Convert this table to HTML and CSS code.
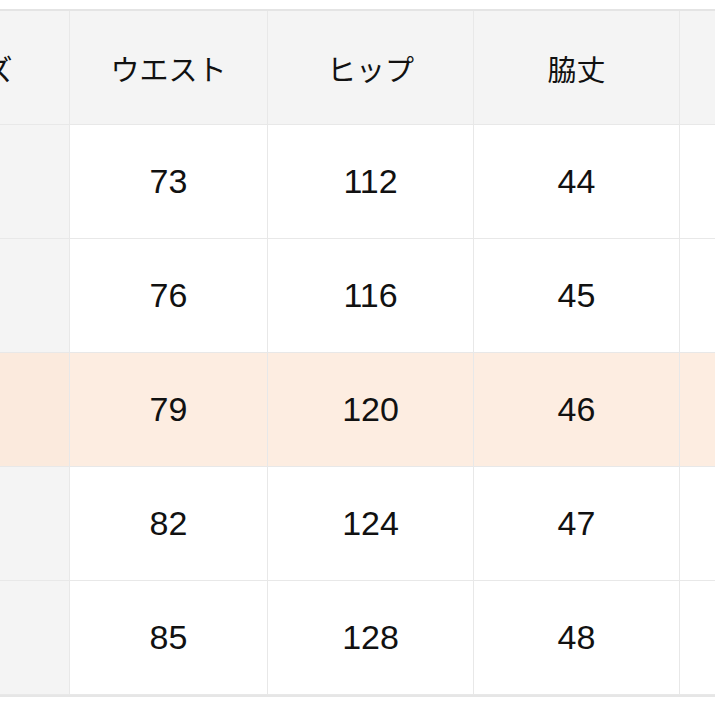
FILE: index.html
```html
<!DOCTYPE html>
<html lang="ja">
<head>
<meta charset="utf-8">
<link rel="stylesheet" href="styles.css">
</head>
<body>
<div class="frame">
  <div class="size-table">
    <div class="cell head first">サイズ</div>
    <div class="cell head">ウエスト</div>
    <div class="cell head">ヒップ</div>
    <div class="cell head">脇丈</div>
    <div class="cell head last"></div>

    <div class="cell first"></div>
    <div class="cell num">73</div>
    <div class="cell num">112</div>
    <div class="cell num">44</div>
    <div class="cell last"></div>

    <div class="cell first"></div>
    <div class="cell num">76</div>
    <div class="cell num">116</div>
    <div class="cell num">45</div>
    <div class="cell last"></div>

    <div class="cell first hl"></div>
    <div class="cell num hl">79</div>
    <div class="cell num hl">120</div>
    <div class="cell num hl">46</div>
    <div class="cell last hl"></div>

    <div class="cell first"></div>
    <div class="cell num">82</div>
    <div class="cell num">124</div>
    <div class="cell num">47</div>
    <div class="cell last"></div>

    <div class="cell first"></div>
    <div class="cell num">85</div>
    <div class="cell num">128</div>
    <div class="cell num">48</div>
    <div class="cell last"></div>
  </div>
</div>
</body>
</html>
```

FILE: styles.css
```css
html, body {
  margin: 0;
  padding: 0;
  background: #ffffff;
  overflow: hidden;
}

.frame {
  width: 715px;
  height: 715px;
  overflow: hidden;
  padding-top: 9px;
  box-sizing: border-box;
}

.size-table {
  display: grid;
  grid-template-columns: 200px 198px 206px 206px 206px;
  grid-auto-rows: 114px;
  width: 1016px;
  margin-left: -130px;
  border-top: 2px solid #e4e4e4;
  border-bottom: 2px solid #e6e6e6;
  color: #111111;
}

.cell {
  box-sizing: border-box;
  display: flex;
  align-items: center;
  justify-content: center;
  border-right: 1px solid #e8e8e8;
  border-bottom: 1px solid #e8e8e8;
  background: #ffffff;
}

.head {
  background: #f4f4f4;
  font-family: "Noto Sans CJK JP", "Noto Sans", sans-serif;
  font-size: 29px;
  font-weight: 400;
}

.first {
  background: #f4f4f4;
}

.num {
  font-family: "Liberation Sans", Arial, sans-serif;
  font-size: 34px;
}

.hl {
  background: #fdede1;
}

.first.hl {
  background: #fbeadd;
}
```
